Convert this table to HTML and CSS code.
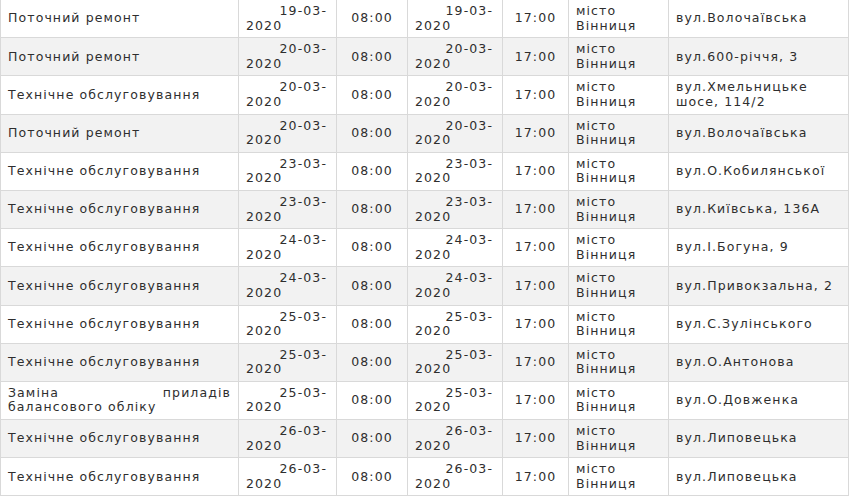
FILE: index.html
```html
<!DOCTYPE html>
<html lang="uk">
<head>
<meta charset="utf-8">
<title>Графік відключень</title>
<link rel="stylesheet" href="styles.css">
</head>
<body>
<table class="schedule">
  <colgroup>
    <col class="c-type">
    <col class="c-date">
    <col class="c-time">
    <col class="c-date2">
    <col class="c-time2">
    <col class="c-city">
    <col class="c-street">
  </colgroup>
  <tbody>
    <tr><td class="type">Поточний ремонт</td><td class="date"><span class="dm">19-03-</span><span class="dy">2020</span></td><td class="time">08:00</td><td class="date"><span class="dm">19-03-</span><span class="dy">2020</span></td><td class="time">17:00</td><td>місто Вінниця</td><td class="street">вул.Волочаївська</td></tr>
    <tr><td class="type">Поточний ремонт</td><td class="date"><span class="dm">20-03-</span><span class="dy">2020</span></td><td class="time">08:00</td><td class="date"><span class="dm">20-03-</span><span class="dy">2020</span></td><td class="time">17:00</td><td>місто Вінниця</td><td class="street">вул.600-річчя, 3</td></tr>
    <tr><td class="type">Технічне обслуговування</td><td class="date"><span class="dm">20-03-</span><span class="dy">2020</span></td><td class="time">08:00</td><td class="date"><span class="dm">20-03-</span><span class="dy">2020</span></td><td class="time">17:00</td><td>місто Вінниця</td><td class="street">вул.Хмельницьке шосе, 114/2</td></tr>
    <tr><td class="type">Поточний ремонт</td><td class="date"><span class="dm">20-03-</span><span class="dy">2020</span></td><td class="time">08:00</td><td class="date"><span class="dm">20-03-</span><span class="dy">2020</span></td><td class="time">17:00</td><td>місто Вінниця</td><td class="street">вул.Волочаївська</td></tr>
    <tr><td class="type">Технічне обслуговування</td><td class="date"><span class="dm">23-03-</span><span class="dy">2020</span></td><td class="time">08:00</td><td class="date"><span class="dm">23-03-</span><span class="dy">2020</span></td><td class="time">17:00</td><td>місто Вінниця</td><td class="street">вул.О.Кобилянської</td></tr>
    <tr><td class="type">Технічне обслуговування</td><td class="date"><span class="dm">23-03-</span><span class="dy">2020</span></td><td class="time">08:00</td><td class="date"><span class="dm">23-03-</span><span class="dy">2020</span></td><td class="time">17:00</td><td>місто Вінниця</td><td class="street">вул.Київська, 136А</td></tr>
    <tr><td class="type">Технічне обслуговування</td><td class="date"><span class="dm">24-03-</span><span class="dy">2020</span></td><td class="time">08:00</td><td class="date"><span class="dm">24-03-</span><span class="dy">2020</span></td><td class="time">17:00</td><td>місто Вінниця</td><td class="street">вул.І.Богуна, 9</td></tr>
    <tr><td class="type">Технічне обслуговування</td><td class="date"><span class="dm">24-03-</span><span class="dy">2020</span></td><td class="time">08:00</td><td class="date"><span class="dm">24-03-</span><span class="dy">2020</span></td><td class="time">17:00</td><td>місто Вінниця</td><td class="street">вул.Привокзальна, 2</td></tr>
    <tr><td class="type">Технічне обслуговування</td><td class="date"><span class="dm">25-03-</span><span class="dy">2020</span></td><td class="time">08:00</td><td class="date"><span class="dm">25-03-</span><span class="dy">2020</span></td><td class="time">17:00</td><td>місто Вінниця</td><td class="street">вул.С.Зулінського</td></tr>
    <tr><td class="type">Технічне обслуговування</td><td class="date"><span class="dm">25-03-</span><span class="dy">2020</span></td><td class="time">08:00</td><td class="date"><span class="dm">25-03-</span><span class="dy">2020</span></td><td class="time">17:00</td><td>місто Вінниця</td><td class="street">вул.О.Антонова</td></tr>
    <tr><td class="type">Заміна приладів балансового обліку</td><td class="date"><span class="dm">25-03-</span><span class="dy">2020</span></td><td class="time">08:00</td><td class="date"><span class="dm">25-03-</span><span class="dy">2020</span></td><td class="time">17:00</td><td>місто Вінниця</td><td class="street">вул.О.Довженка</td></tr>
    <tr><td class="type">Технічне обслуговування</td><td class="date"><span class="dm">26-03-</span><span class="dy">2020</span></td><td class="time">08:00</td><td class="date"><span class="dm">26-03-</span><span class="dy">2020</span></td><td class="time">17:00</td><td>місто Вінниця</td><td class="street">вул.Липовецька</td></tr>
    <tr><td class="type">Технічне обслуговування</td><td class="date"><span class="dm">26-03-</span><span class="dy">2020</span></td><td class="time">08:00</td><td class="date"><span class="dm">26-03-</span><span class="dy">2020</span></td><td class="time">17:00</td><td>місто Вінниця</td><td class="street">вул.Липовецька</td></tr>
  </tbody>
</table>
</body>
</html>
```

FILE: styles.css
```css
html, body {
  margin: 0;
  padding: 0;
  background: #ffffff;
}

.schedule {
  border-collapse: collapse;
  table-layout: fixed;
  width: 848px;
  margin-top: -1px;
  font-family: "DejaVu Sans", Verdana, sans-serif;
  font-size: 12.5px;
  letter-spacing: 1.1px;
  line-height: 14.5px;
  color: #2e2e2e;
}

.c-type { width: 238px; }
.c-date { width: 98px; }
.c-time { width: 71px; }
.c-date2 { width: 95px; }
.c-time2 { width: 66px; }
.c-city { width: 100px; }
.c-street { width: 180px; }

.schedule td {
  border: 1px solid #d9d9d9;
  height: 29.2px;
  padding: 4px 7px;
  vertical-align: middle;
  text-align: left;
}

.schedule tr:nth-child(even) td {
  background: #f2f2f2;
}

.schedule td.type {
  text-align: justify;
}

.schedule td.date {
  padding-right: 9px;
}

.dm {
  display: block;
  text-align: right;
}

.dy {
  display: block;
  text-align: left;
}

.schedule td.time {
  text-align: center;
}

.schedule td.street {
  padding-right: 2px;
}
```
